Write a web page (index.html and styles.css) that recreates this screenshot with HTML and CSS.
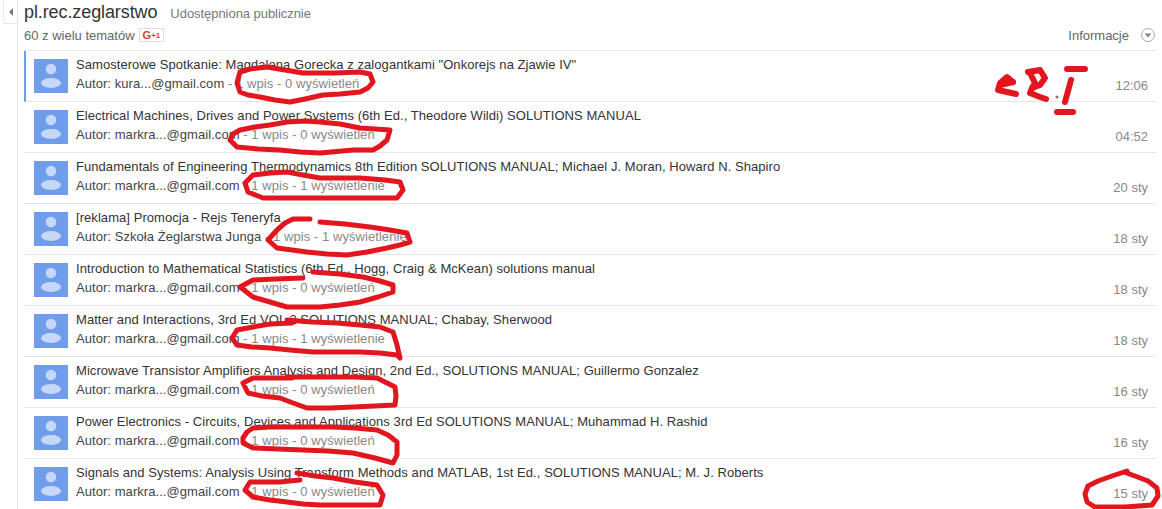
FILE: index.html

```html
<!DOCTYPE html>
<html lang="pl">
<head>
    <meta charset="UTF-8">
    <title>pl.rec.zeglarstwo</title>
    <link rel="stylesheet" href="styles.css">
</head>
<body>
    <div class="page">
        <div class="side">
            <div class="back"><span class="back-arrow"></span></div>
        </div>
        <div class="main">
            <div class="head">
                <div class="title-line">
                    <span class="group-name">pl.rec.zeglarstwo</span>
                    <span class="shared">Udostępniona publicznie</span>
                </div>
                <div class="sub-line">
                    <div class="count">
                        <span>60 z wielu tematów</span>
                        <span class="gplus">G<sup>+1</sup></span>
                    </div>
                    <div class="info">
                        <span>Informacje</span>
                        <svg class="info-icon" width="16" height="16" viewBox="0 0 16 16">
                            <circle cx="8" cy="8" r="6.5" fill="none" stroke="#aaa"/>
                            <path d="M4.5 6.5h7L8 10.5z" fill="#888"/>
                        </svg>
                    </div>
                </div>
            </div>

            <div class="list">
                <div class="row active">
                    <div class="avatar"><svg width="34" height="34" viewBox="0 0 34 34"><circle cx="17" cy="10" r="5.3" fill="#c6d8f8"/><ellipse cx="17" cy="24" rx="10" ry="5" fill="#c6d8f8"/></svg></div>
                    <div class="text">
                        <div class="subject">Samosterowe Spotkanie: Magdalena Gorecka z zalogantkami "Onkorejs na Zjawie IV"</div>
                        <div class="meta">Autor: kura...@gmail.com <span class="stats">- 1 wpis - 0 wyświetleń</span></div>
                    </div>
                    <div class="date">12:06</div>
                </div>
                <div class="row">
                    <div class="avatar"><svg width="34" height="34" viewBox="0 0 34 34"><circle cx="17" cy="10" r="5.3" fill="#c6d8f8"/><ellipse cx="17" cy="24" rx="10" ry="5" fill="#c6d8f8"/></svg></div>
                    <div class="text">
                        <div class="subject">Electrical Machines, Drives and Power Systems (6th Ed., Theodore Wildi) SOLUTIONS MANUAL</div>
                        <div class="meta">Autor: markra...@gmail.com <span class="stats">- 1 wpis - 0 wyświetleń</span></div>
                    </div>
                    <div class="date">04:52</div>
                </div>
                <div class="row">
                    <div class="avatar"><svg width="34" height="34" viewBox="0 0 34 34"><circle cx="17" cy="10" r="5.3" fill="#c6d8f8"/><ellipse cx="17" cy="24" rx="10" ry="5" fill="#c6d8f8"/></svg></div>
                    <div class="text">
                        <div class="subject">Fundamentals of Engineering Thermodynamics 8th Edition SOLUTIONS MANUAL; Michael J. Moran, Howard N. Shapiro</div>
                        <div class="meta">Autor: markra...@gmail.com <span class="stats">- 1 wpis - 1 wyświetlenie</span></div>
                    </div>
                    <div class="date">20 sty</div>
                </div>
                <div class="row">
                    <div class="avatar"><svg width="34" height="34" viewBox="0 0 34 34"><circle cx="17" cy="10" r="5.3" fill="#c6d8f8"/><ellipse cx="17" cy="24" rx="10" ry="5" fill="#c6d8f8"/></svg></div>
                    <div class="text">
                        <div class="subject">[reklama] Promocja - Rejs Teneryfa</div>
                        <div class="meta">Autor: Szkoła Żeglarstwa Junga <span class="stats">- 1 wpis - 1 wyświetlenie</span></div>
                    </div>
                    <div class="date">18 sty</div>
                </div>
                <div class="row">
                    <div class="avatar"><svg width="34" height="34" viewBox="0 0 34 34"><circle cx="17" cy="10" r="5.3" fill="#c6d8f8"/><ellipse cx="17" cy="24" rx="10" ry="5" fill="#c6d8f8"/></svg></div>
                    <div class="text">
                        <div class="subject">Introduction to Mathematical Statistics (6th Ed., Hogg, Craig &amp; McKean) solutions manual</div>
                        <div class="meta">Autor: markra...@gmail.com <span class="stats">- 1 wpis - 0 wyświetleń</span></div>
                    </div>
                    <div class="date">18 sty</div>
                </div>
                <div class="row">
                    <div class="avatar"><svg width="34" height="34" viewBox="0 0 34 34"><circle cx="17" cy="10" r="5.3" fill="#c6d8f8"/><ellipse cx="17" cy="24" rx="10" ry="5" fill="#c6d8f8"/></svg></div>
                    <div class="text">
                        <div class="subject">Matter and Interactions, 3rd Ed VOL 2 SOLUTIONS MANUAL; Chabay, Sherwood</div>
                        <div class="meta">Autor: markra...@gmail.com <span class="stats">- 1 wpis - 1 wyświetlenie</span></div>
                    </div>
                    <div class="date">18 sty</div>
                </div>
                <div class="row">
                    <div class="avatar"><svg width="34" height="34" viewBox="0 0 34 34"><circle cx="17" cy="10" r="5.3" fill="#c6d8f8"/><ellipse cx="17" cy="24" rx="10" ry="5" fill="#c6d8f8"/></svg></div>
                    <div class="text">
                        <div class="subject">Microwave Transistor Amplifiers Analysis and Design, 2nd Ed., SOLUTIONS MANUAL; Guillermo Gonzalez</div>
                        <div class="meta">Autor: markra...@gmail.com <span class="stats">- 1 wpis - 0 wyświetleń</span></div>
                    </div>
                    <div class="date">16 sty</div>
                </div>
                <div class="row">
                    <div class="avatar"><svg width="34" height="34" viewBox="0 0 34 34"><circle cx="17" cy="10" r="5.3" fill="#c6d8f8"/><ellipse cx="17" cy="24" rx="10" ry="5" fill="#c6d8f8"/></svg></div>
                    <div class="text">
                        <div class="subject">Power Electronics - Circuits, Devices and Applications 3rd Ed SOLUTIONS MANUAL; Muhammad H. Rashid</div>
                        <div class="meta">Autor: markra...@gmail.com <span class="stats">- 1 wpis - 0 wyświetleń</span></div>
                    </div>
                    <div class="date">16 sty</div>
                </div>
                <div class="row">
                    <div class="avatar"><svg width="34" height="34" viewBox="0 0 34 34"><circle cx="17" cy="10" r="5.3" fill="#c6d8f8"/><ellipse cx="17" cy="24" rx="10" ry="5" fill="#c6d8f8"/></svg></div>
                    <div class="text">
                        <div class="subject">Signals and Systems: Analysis Using Transform Methods and MATLAB, 1st Ed., SOLUTIONS MANUAL; M. J. Roberts</div>
                        <div class="meta">Autor: markra...@gmail.com <span class="stats">- 1 wpis - 0 wyświetleń</span></div>
                    </div>
                    <div class="date">15 sty</div>
                </div>
            </div>
        </div>
    </div>

    <!-- hand drawn marks lying over the list -->
    <svg class="marks" width="1162" height="509" viewBox="0 0 1162 509">
        <g class="mark-line">
            <polyline points="240,72 250,69 267,67 285,70 303,73 335,73 360,72 370,74 373,82 368,88 360,92 340,94 323,95 305,99 290,102 275,100 260,97 248,95 240,92 237,83 240,72"/>
            <polyline points="230,140 233,134 240,130 255,127 270,125 287,122 305,121 320,122 340,124 360,128 375,129 390,130 387,140 380,146 373,150 353,150 320,153 300,152 280,150 258,149 237,147 230,140"/>
            <polyline points="245,183 253,175 270,173 287,172 303,175 320,178 340,178 360,178 385,180 400,182 403,190 397,198 375,198 353,198 303,198 280,198 263,198 248,192 245,183"/>
            <polyline points="310,219 293,219 285,223 277,230 268,240 277,248 292,250 307,252 327,254 347,255 367,252 387,248 400,245 410,242 407,233 390,230 370,227 345,224 320,222"/>
            <polyline points="303,278 275,279 253,280 240,287 253,297 270,302 287,307 303,307 320,307 340,305 360,302 378,297 393,292 393,285 380,281 363,277 340,274 313,272"/>
            <polyline points="292,323 270,324 253,327 237,330 232,338 237,345 252,347 270,348 290,350 313,352 335,352 360,352 380,353 397,355 400,358 397,345 393,332 380,327 360,325 337,323 312,322 287,320"/>
            <polyline points="292,378 270,378 253,378 243,383 248,393 262,396 280,398 293,403 307,408 330,408 353,407 375,406 395,405 396,396 395,387 377,378 355,377 330,377 310,377 287,377"/>
            <polyline points="243,438 247,432 253,428 270,427 287,427 310,427 333,427 355,428 377,430 388,435 397,442 397,455 393,463 375,458 353,453 328,451 303,450 278,449 253,448 243,443 243,438"/>
            <polyline points="300,480 280,482 265,482 250,482 245,490 253,497 270,500 287,502 303,504 320,505 350,505 380,505 383,495 377,485 355,482 333,478 315,476 297,473"/>
            <polyline points="1127,471 1112,476 1098,481 1088,486 1085,494 1087,502 1095,507 1125,507 1152,505 1158,496 1157,488 1148,481 1135,476 1124,472"/>
        </g>
        <g class="mark-thick">
            <polyline points="1013,82 1007,77 1000,83 998,90 1007,92 1016,94"/>
            <polyline points="1000,85 1013,82"/>
            <polyline points="1028,72 1040,70 1045,78 1040,85 1032,88 1030,93 1040,97 1046,99"/>
            <polyline points="1030,73 1035,83 1032,88"/>
            <polyline points="1085,69 1067,69"/>
            <polyline points="1071,80 1065,102"/>
            <polyline points="1057,112 1073,112"/>
        </g>
        <circle class="mark-dot" cx="1057" cy="97" r="1.5"/>
    </svg>
</body>
</html>
```

FILE: styles.css

```css
body {
    margin: 0;
    font-family: "Liberation Sans", Arial, sans-serif;
    font-size: 13px;
    color: #222;
    background: #fff;
}
.page {
    display: flex;
    height: 509px;
    overflow: hidden;
}
.side {
    width: 17px;
    border-right: 1px solid #e5e5e5;
    flex-shrink: 0;
}
.back {
    height: 23px;
    margin-left: 3px;
    border-bottom: 1px solid #e5e5e5;
    border-left: 1px solid #eee;
    display: flex;
    align-items: center;
    justify-content: center;
}
.back-arrow {
    border-top: 4px solid transparent;
    border-bottom: 4px solid transparent;
    border-right: 4px solid #777;
}
.main {
    flex: 1;
    margin-left: 6px;
    margin-right: 6px;
    min-width: 0;
}
.head {
    height: 50px;
}
.title-line {
    display: flex;
    align-items: baseline;
    gap: 13px;
    padding-top: 2px;
}
.group-name {
    font-size: 18px;
    letter-spacing: -0.1px;
    color: #333;
}
.shared {
    letter-spacing: -0.05px;
    color: #777;
}
.sub-line {
    display: flex;
    justify-content: space-between;
    align-items: center;
    margin-top: 4px;
}
.count {
    display: flex;
    align-items: center;
    gap: 4px;
    color: #666;
}
.gplus {
    border: 1px solid #ddd;
    height: 12px;
    padding: 0 3px;
    font-size: 11px;
    line-height: 12px;
    font-weight: bold;
    color: #d8412f;
}
.gplus sup {
    font-size: 8px;
    vertical-align: 1px;
    line-height: 0;
}
.info {
    display: flex;
    align-items: center;
    gap: 11px;
    color: #666;
}
.list {
    border-top: 1px solid #e5e5e5;
}
.row {
    display: flex;
    height: 50px;
    border-bottom: 1px solid #e5e5e5;
    padding-left: 10px;
}
.row.active {
    border-left: 2px solid #6f9ceb;
    padding-left: 8px;
}
.avatar {
    width: 34px;
    height: 34px;
    margin-top: 8px;
    background: #6f9ceb;
    flex-shrink: 0;
}
.avatar svg {
    display: block;
}
.text {
    flex: 1;
    margin-left: 8px;
    padding-top: 5px;
    min-width: 0;
}
.subject {
    line-height: 17px;
    letter-spacing: 0.06px;
    color: #333;
}
.meta {
    line-height: 17px;
    margin-top: 2px;
    letter-spacing: 0.06px;
    color: #444;
}
.stats {
    color: #888;
}
.date {
    align-self: flex-end;
    padding-right: 8px;
    padding-bottom: 8px;
    color: #888;
}
.marks {
    position: absolute;
    left: 0;
    top: 0;
    pointer-events: none;
}
.mark-line polyline {
    fill: none;
    stroke: #e2161f;
    stroke-width: 5;
    stroke-linecap: round;
    stroke-linejoin: round;
}
.mark-thick polyline {
    fill: none;
    stroke: #e2161f;
    stroke-width: 6;
    stroke-linecap: round;
    stroke-linejoin: round;
}
.mark-dot {
    fill: #a0696c;
}
```
